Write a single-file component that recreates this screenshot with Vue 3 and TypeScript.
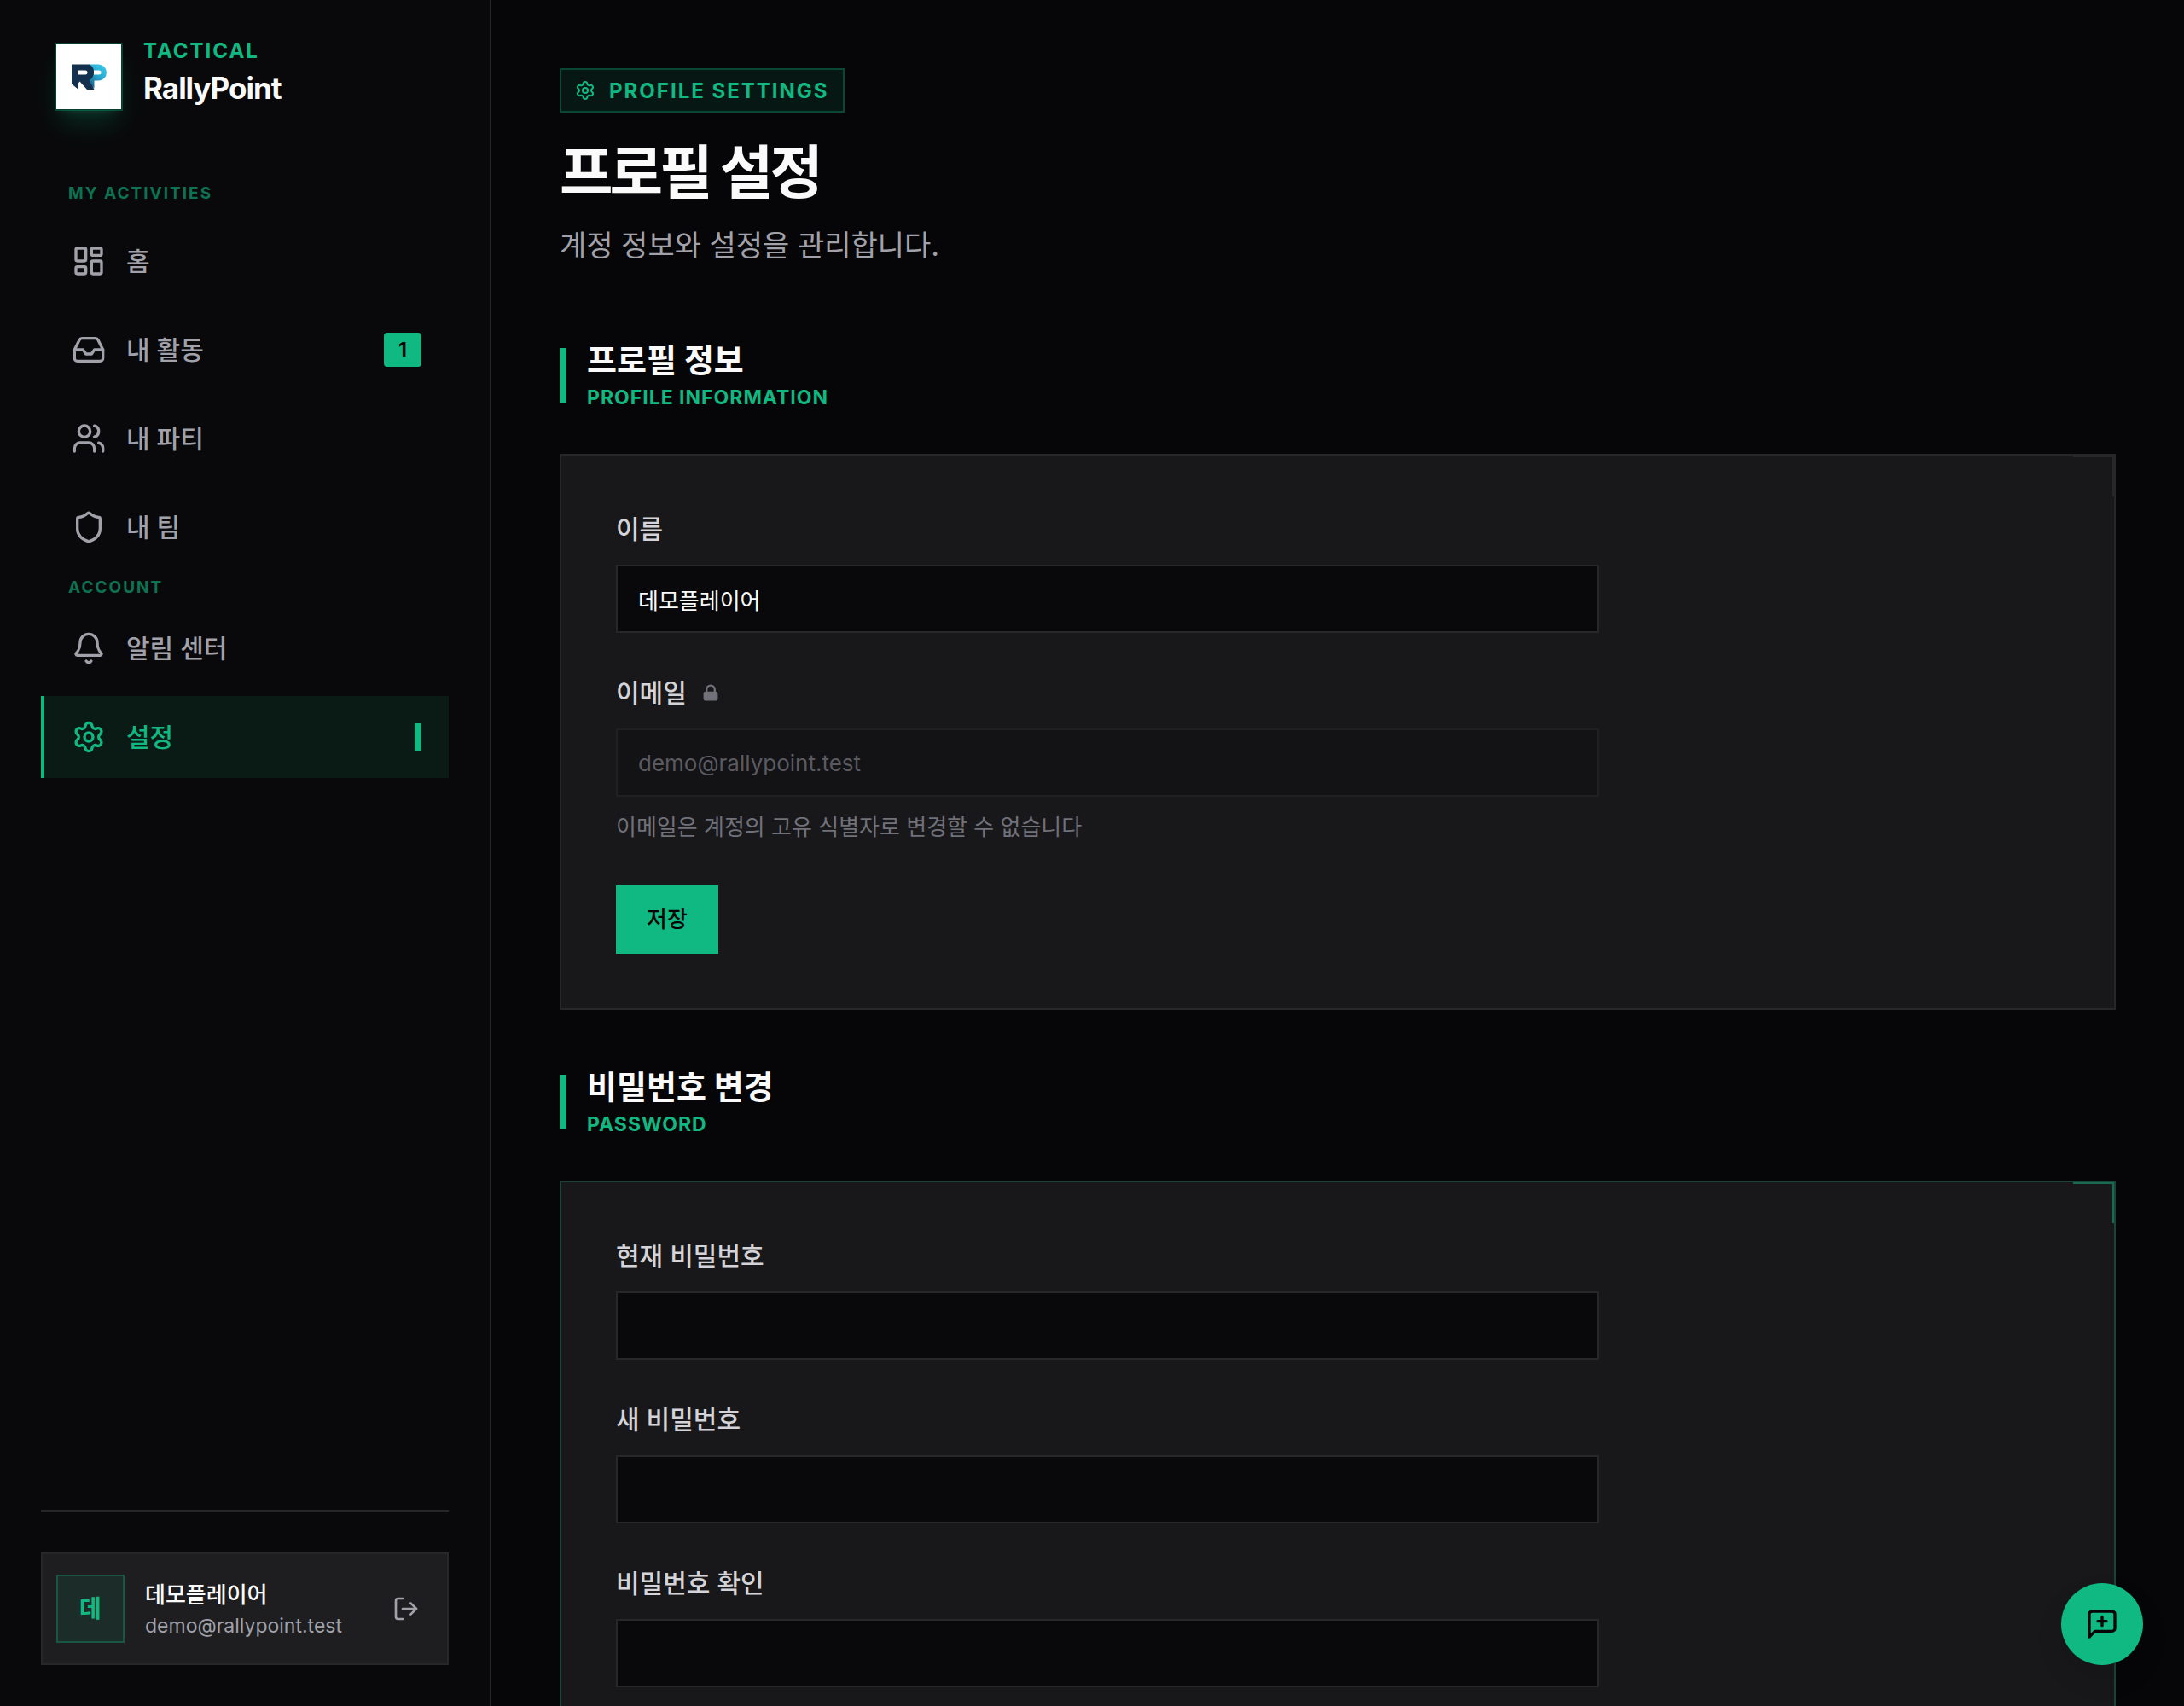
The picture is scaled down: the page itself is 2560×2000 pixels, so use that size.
<script setup lang="ts">
import { ref } from 'vue'

interface Shape {
  tag: 'path' | 'rect' | 'circle' | 'polyline'
  attrs: Record<string, string | number>
}
interface NavItem {
  label: string
  icon: string
  badge?: number
  active?: boolean
}
interface NavGroup {
  title: string
  items: NavItem[]
}

const p = (d: string): Shape => ({ tag: 'path', attrs: { d } })
const r = (x: number, y: number, width: number, height: number): Shape => ({
  tag: 'rect',
  attrs: { x, y, width, height, rx: 1 },
})

const icons: Record<string, Shape[]> = {
  home: [r(3, 3, 7, 9), r(14, 3, 7, 5), r(14, 12, 7, 9), r(3, 16, 7, 5)],
  inbox: [
    { tag: 'polyline', attrs: { points: '22 12 16 12 14 15 10 15 8 12 2 12' } },
    p('M5.45 5.11 2 12v6a2 2 0 0 0 2 2h16a2 2 0 0 0 2-2v-6l-3.45-6.89A2 2 0 0 0 16.76 4H7.24a2 2 0 0 0-1.79 1.11z'),
  ],
  users: [
    p('M16 21v-2a4 4 0 0 0-4-4H6a4 4 0 0 0-4 4v2'),
    { tag: 'circle', attrs: { cx: 9, cy: 7, r: 4 } },
    p('M22 21v-2a4 4 0 0 0-3-3.87'),
    p('M16 3.13a4 4 0 0 1 0 7.75'),
  ],
  shield: [
    p('M20 13c0 5-3.5 7.5-7.66 8.95a1 1 0 0 1-.67-.01C7.5 20.5 4 18 4 13V6a1 1 0 0 1 1-1c2 0 4.5-1.2 6.24-2.72a1.17 1.17 0 0 1 1.52 0C14.51 3.81 17 5 19 5a1 1 0 0 1 1 1z'),
  ],
  bell: [
    p('M10.268 21a2 2 0 0 0 3.464 0'),
    p('M3.262 15.326A1 1 0 0 0 4 17h16a1 1 0 0 0 .74-1.673C19.41 13.956 18 12.499 18 8A6 6 0 0 0 6 8c0 4.499-1.411 5.956-2.738 7.326'),
  ],
  settings: [
    p('M9.671 4.136a2.34 2.34 0 0 1 4.659 0 2.34 2.34 0 0 0 3.319 1.915 2.34 2.34 0 0 1 2.33 4.033 2.34 2.34 0 0 0 0 3.831 2.34 2.34 0 0 1-2.33 4.033 2.34 2.34 0 0 0-3.319 1.915 2.34 2.34 0 0 1-4.659 0 2.34 2.34 0 0 0-3.32-1.915 2.34 2.34 0 0 1-2.33-4.033 2.34 2.34 0 0 0 0-3.831A2.34 2.34 0 0 1 6.35 6.051a2.34 2.34 0 0 0 3.319-1.915'),
    { tag: 'circle', attrs: { cx: 12, cy: 12, r: 3 } },
  ],
}

const groups: NavGroup[] = [
  {
    title: 'MY ACTIVITIES',
    items: [
      { label: '홈', icon: 'home' },
      { label: '내 활동', icon: 'inbox', badge: 1 },
      { label: '내 파티', icon: 'users' },
      { label: '내 팀', icon: 'shield' },
    ],
  },
  {
    title: 'ACCOUNT',
    items: [
      { label: '알림 센터', icon: 'bell' },
      { label: '설정', icon: 'settings', active: true },
    ],
  },
]

const name = ref('데모플레이어')
const email = 'demo@rallypoint.test'

const passwords = ref([
  { id: 'current-password', label: '현재 비밀번호', value: '' },
  { id: 'new-password', label: '새 비밀번호', value: '' },
  { id: 'confirm-password', label: '비밀번호 확인', value: '' },
])
</script>

<template>
  <div class="app">
    <aside class="sidebar">
      <a href="#" class="brand">
        <span class="brand-mark">
          <svg viewBox="0 0 76 76" aria-hidden="true">
            <defs>
              <linearGradient id="mark-sky" gradientUnits="userSpaceOnUse" x1="38" y1="44" x2="54" y2="26">
                <stop offset="0" stop-color="#1b6c94" />
                <stop offset="0.5" stop-color="#27a5d0" />
                <stop offset="1" stop-color="#37c3e6" />
              </linearGradient>
            </defs>
            <path fill="url(#mark-sky)" fill-rule="evenodd" d="M38 23.500h11.500a9.500 9.500 0 0 1 0 19H44.500v9L36 44zM44 30.500v5h6a2.500 2.500 0 0 0 0-5z" />
            <path fill="#14304f" fill-rule="evenodd" d="M18 23.500h20c4 1 6 5 6 9s-2 8-5.500 9.500L44.500 53H36L27.500 43.500 25.500 46v6.500L18 46.500zM25 30.500v5h9a2.500 2.500 0 0 0 0-5z" />
          </svg>
        </span>
        <span class="brand-text">
          <span class="brand-tag">TACTICAL</span>
          <span class="brand-name">RallyPoint</span>
        </span>
      </a>

      <nav class="nav">
        <section v-for="group in groups" :key="group.title" class="nav-group">
          <h2 class="nav-title">{{ group.title }}</h2>
          <ul class="nav-list">
            <li v-for="item in group.items" :key="item.label">
              <a href="#" class="nav-item" :class="{ active: item.active }">
                <svg class="icon nav-icon" viewBox="0 0 24 24" aria-hidden="true">
                  <component :is="s.tag" v-for="(s, i) in icons[item.icon]" :key="i" v-bind="s.attrs" />
                </svg>
                <span class="nav-label">{{ item.label }}</span>
                <span v-if="item.badge" class="count">{{ item.badge }}</span>
                <span v-if="item.active" class="marker"></span>
              </a>
            </li>
          </ul>
        </section>
      </nav>

      <div class="account">
        <div class="user">
          <span class="avatar">데</span>
          <div class="user-text">
            <span class="user-name">{{ name }}</span>
            <span class="user-email">{{ email }}</span>
          </div>
          <button type="button" class="logout" aria-label="로그아웃">
            <svg class="icon" viewBox="0 0 24 24" aria-hidden="true">
              <path d="m16 17 5-5-5-5" />
              <path d="M21 12H9" />
              <path d="M9 21H5a2 2 0 0 1-2-2V5a2 2 0 0 1 2-2h4" />
            </svg>
          </button>
        </div>
      </div>
    </aside>

    <main class="main">
      <header class="page-head">
        <span class="chip">
          <svg class="icon" viewBox="0 0 24 24" aria-hidden="true">
            <component :is="s.tag" v-for="(s, i) in icons.settings" :key="i" v-bind="s.attrs" />
          </svg>
          PROFILE SETTINGS
        </span>
        <h1>프로필 설정</h1>
        <p>계정 정보와 설정을 관리합니다.</p>
      </header>

      <section class="section">
        <header class="section-head">
          <div>
            <h2>프로필 정보</h2>
            <p>PROFILE INFORMATION</p>
          </div>
        </header>
        <form class="card" @submit.prevent>
          <div class="field">
            <label for="name">이름</label>
            <input id="name" v-model="name" type="text" />
          </div>
          <div class="field">
            <label for="email">
              이메일
              <svg class="lock" viewBox="0 0 20 20" aria-hidden="true">
                <path fill-rule="evenodd" clip-rule="evenodd" d="M5 9V7a5 5 0 0 1 10 0v2a2 2 0 0 1 2 2v5a2 2 0 0 1-2 2H5a2 2 0 0 1-2-2v-5a2 2 0 0 1 2-2zm8-2v2H7V7a3 3 0 0 1 6 0z" />
              </svg>
            </label>
            <input id="email" :value="email" type="email" disabled />
            <p class="help">이메일은 계정의 고유 식별자로 변경할 수 없습니다</p>
          </div>
          <button type="submit" class="save">저장</button>
        </form>
      </section>

      <section class="section">
        <header class="section-head">
          <div>
            <h2>비밀번호 변경</h2>
            <p>PASSWORD</p>
          </div>
        </header>
        <form class="card accent" @submit.prevent>
          <div v-for="field in passwords" :key="field.id" class="field">
            <label :for="field.id">{{ field.label }}</label>
            <input :id="field.id" v-model="field.value" type="password" autocomplete="off" />
          </div>
        </form>
      </section>
    </main>

    <button type="button" class="fab" aria-label="피드백 보내기">
      <svg class="icon" viewBox="0 0 24 24" aria-hidden="true">
        <path d="M21 15a2 2 0 0 1-2 2H7l-4 4V5a2 2 0 0 1 2-2h14a2 2 0 0 1 2 2z" />
        <path d="M12 7v6" />
        <path d="M9 10h6" />
      </svg>
    </button>
  </div>
</template>

<style>
body {
  background: #060608;
}
</style>

<style scoped>
.app,
.app *,
.card::after {
  box-sizing: border-box;
  margin: 0;
  padding: 0;
}
.app {
  display: flex;
  height: 100vh;
  overflow: hidden;
  color: #fafafa;
  font-family: Inter, 'Noto Sans CJK KR', sans-serif;
  font-size: 26px;
}
a {
  color: inherit;
  text-decoration: none;
}
ul {
  list-style: none;
}
button,
input {
  font: inherit;
}
button {
  border: 0;
  cursor: pointer;
}
.icon {
  display: block;
  flex: none;
  fill: none;
  stroke: currentColor;
  stroke-width: 2;
  stroke-linecap: round;
  stroke-linejoin: round;
}

.sidebar {
  display: flex;
  flex: none;
  flex-direction: column;
  width: 576px;
  padding: 48px;
  border-right: 2px solid #27272a;
  background: #09090b;
}
.brand {
  display: flex;
  align-items: center;
  gap: 24px;
  height: 84px;
  padding: 0 16px;
}
.brand-mark {
  flex: none;
  width: 80px;
  height: 80px;
  border: 2px solid rgba(16, 185, 129, 0.3);
  background: #fff;
  background-clip: padding-box;
  box-shadow: 0 20px 30px -6px rgba(16, 185, 129, 0.2), 0 8px 12px -8px rgba(16, 185, 129, 0.2);
}
.brand-mark svg {
  display: block;
}
.brand-text {
  display: flex;
  flex-direction: column;
  padding-bottom: 10px;
}
.brand-tag {
  color: #10b981;
  font-size: 24px;
  font-weight: 700;
  line-height: 36px;
  letter-spacing: 2px;
}
.brand-name {
  font-size: 35px;
  font-weight: 700;
  line-height: 50px;
  letter-spacing: -1px;
}

.nav {
  flex: 1;
  padding-top: 80px;
}
.nav-group + .nav-group {
  margin-top: 8px;
}
.nav-title {
  margin-bottom: 8px;
  padding: 0 32px;
  color: #10b981;
  font-size: 19px;
  font-weight: 700;
  line-height: 30px;
  letter-spacing: 2px;
  opacity: 0.6;
}
.nav-group:first-child .nav-title {
  margin-bottom: 16px;
}
.nav-list {
  display: flex;
  flex-direction: column;
  gap: 8px;
}
.nav-item {
  display: flex;
  align-items: center;
  gap: 24px;
  height: 96px;
  padding: 0 32px;
  border-left: 4px solid transparent;
  color: #a1a1aa;
  font-size: 30px;
  font-weight: 500;
  line-height: 44px;
}
.nav-item.active {
  border-color: #10b981;
  background: rgba(16, 185, 129, 0.1);
  color: #10b981;
}
.nav-icon {
  width: 40px;
}
.nav-label {
  flex: 1;
}
.count {
  width: 44px;
  border-radius: 4px;
  background: #10b981;
  color: #060608;
  font-size: 23px;
  font-weight: 700;
  line-height: 40px;
  text-align: center;
}
.marker {
  width: 8px;
  height: 32px;
  background: #10b981;
}

.account {
  padding-top: 48px;
  border-top: 2px solid #27272a;
}
.user {
  display: flex;
  align-items: center;
  gap: 24px;
  padding: 24px 16px;
  border: 2px solid #27272a;
  background: #1e1e20;
}
.avatar {
  flex: none;
  width: 80px;
  border: 2px solid rgba(16, 185, 129, 0.3);
  background: rgba(16, 185, 129, 0.1);
  color: #10b981;
  font-size: 28px;
  font-weight: 700;
  line-height: 76px;
  text-align: center;
}
.user-text {
  display: flex;
  flex: 1;
  flex-direction: column;
  min-width: 0;
  padding-top: 4px;
}
.user-name {
  font-weight: 500;
  line-height: 36px;
}
.user-email {
  color: #a1a1aa;
  font-size: 23px;
  line-height: 36px;
}
.logout {
  padding: 16px;
  background: none;
  color: #a1a1aa;
}
.logout .icon {
  width: 32px;
}

.main {
  flex: 1;
  min-width: 0;
  padding: 80px;
  overflow: hidden;
}
.page-head {
  padding-bottom: 84px;
}
.chip {
  display: inline-flex;
  align-items: center;
  gap: 16px;
  height: 52px;
  padding: 0 16px;
  border: 2px solid rgba(16, 185, 129, 0.3);
  background: rgba(16, 185, 129, 0.1);
  color: #10b981;
  font-size: 24px;
  font-weight: 700;
  letter-spacing: 2px;
  vertical-align: top;
}
.chip .icon {
  width: 24px;
}
.page-head h1 {
  margin-top: 28px;
  font-size: 68px;
  font-weight: 700;
  line-height: 84px;
  letter-spacing: -4px;
}
.page-head p {
  margin-top: 20px;
  color: #a1a1aa;
  font-size: 34px;
  line-height: 48px;
}

.section {
  margin-bottom: 64px;
}
.section-head {
  display: flex;
  align-items: center;
  gap: 24px;
  margin-bottom: 48px;
}
.section-head::before {
  width: 8px;
  height: 64px;
  background: #10b981;
  content: '';
}
.section-head h2 {
  font-size: 38px;
  font-weight: 700;
  line-height: 52px;
}
.section-head p {
  color: #10b981;
  font-size: 23px;
  font-weight: 700;
  line-height: 36px;
  letter-spacing: 1px;
}
.card {
  position: relative;
  display: flex;
  flex-direction: column;
  align-items: flex-start;
  gap: 48px;
  padding: 64px;
  border: 2px solid #27272a;
  background: #18181b;
}
.card::after {
  position: absolute;
  top: 0;
  right: 0;
  width: 48px;
  height: 48px;
  border: solid #27272a;
  border-width: 2px 2px 0 0;
  content: '';
}
.card.accent {
  border-color: #1b4438;
}
.card.accent::after {
  border-color: #186b50;
}
.field {
  width: 100%;
  max-width: 1152px;
}
.field label {
  display: flex;
  align-items: center;
  gap: 16px;
  margin-bottom: 20px;
  color: #d4d4d8;
  font-size: 30px;
  font-weight: 500;
  line-height: 44px;
}
.lock {
  width: 24px;
  fill: #71717a;
}
.field input {
  display: block;
  width: 100%;
  height: 80px;
  padding: 0 24px;
  border: 2px solid #27272a;
  border-radius: 0;
  outline: none;
  background: #09090b;
  color: #fafafa;
}
.field input:disabled {
  border-color: #202023;
  background: #131316;
  color: #5a5a60;
}
.help {
  margin-top: 16px;
  color: #71717a;
  line-height: 40px;
}
.save {
  height: 80px;
  padding: 0 36px;
  background: #10b981;
  color: #060608;
  font-weight: 500;
  line-height: 40px;
}
.fab {
  position: fixed;
  right: 48px;
  bottom: 48px;
  display: grid;
  place-items: center;
  width: 96px;
  height: 96px;
  border-radius: 50%;
  background: #10b981;
  box-shadow: 0 16px 32px rgba(0, 0, 0, 0.1);
  color: #060608;
}
.fab .icon {
  width: 40px;
}
</style>
